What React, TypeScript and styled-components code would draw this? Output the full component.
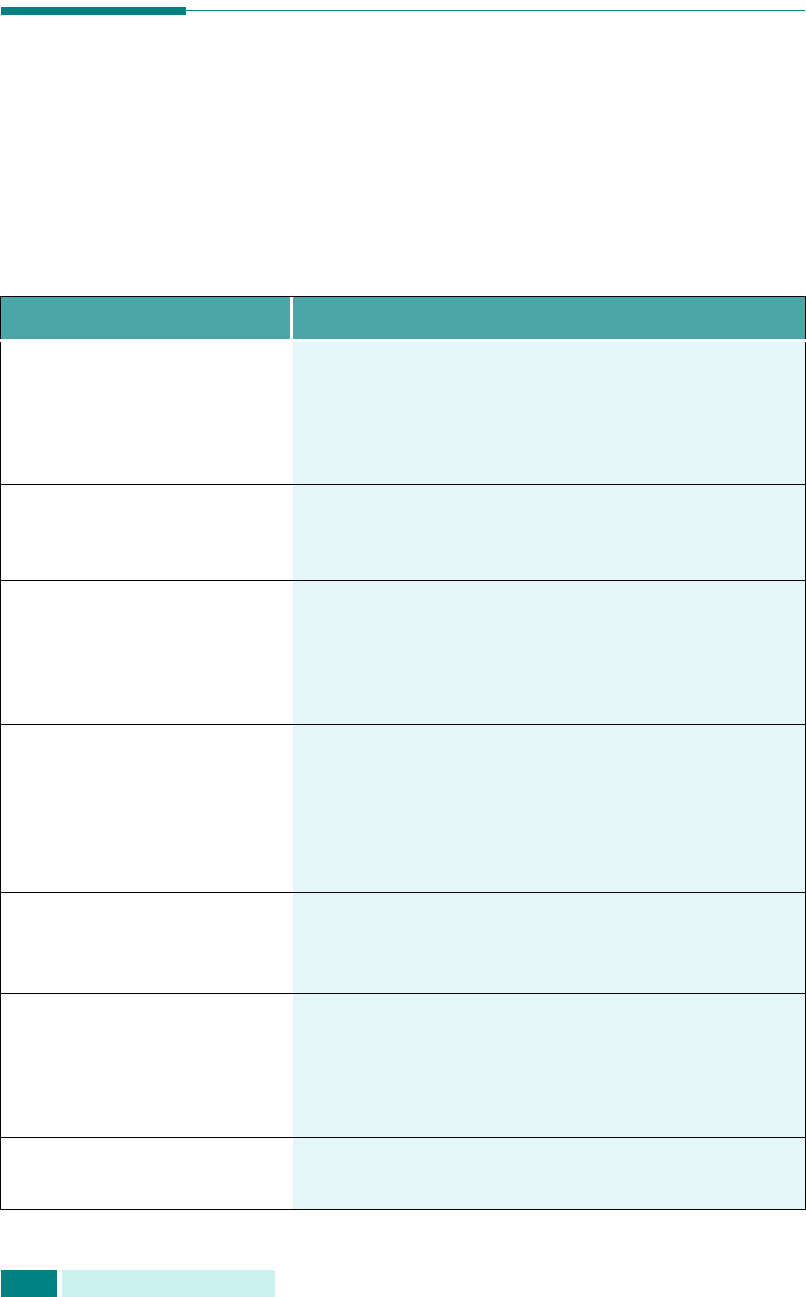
import React from 'react';
import styled, { createGlobalStyle } from 'styled-components';

const rowHeights = [143, 96, 144, 168, 101, 144, 72];

const GlobalStyle = createGlobalStyle`
  html, body {
    margin: 0;
    padding: 0;
    background: #fff;
    font-family: "Liberation Sans", Arial, sans-serif;
  }
  * {
    box-sizing: border-box;
  }
`;

const Page = styled.div`
  width: 806px;
  height: 1297px;
  overflow: hidden;
  background: #fff;
`;

const TopRule = styled.div`
  display: flex;
  align-items: flex-start;
  padding: 7px 1px 0 1px;
`;

const RuleBar = styled.div`
  width: 185px;
  height: 8px;
  background: #008080;
`;

const RuleLine = styled.div`
  flex: 1;
  height: 1px;
  margin-top: 3px;
  background: #008a7a;
`;

const Table = styled.div`
  margin-top: 281px;
  width: 806px;
`;

const HeaderRow = styled.div`
  display: grid;
  grid-template-columns: 289px 512px;
  column-gap: 3px;
  height: 43px;
  border-top: 1px solid #000;
  border-left: 1px solid #000;
  border-right: 1px solid #000;
`;

const HeaderCell = styled.div`
  background: #4da6a6;
  color: #fff;
`;

const Body = styled.div`
  margin-top: 3px;
  border-left: 1px solid #000;
  border-right: 1px solid #000;
`;

const BodyRow = styled.div<{ $height: number }>`
  display: grid;
  grid-template-columns: 292px 512px;
  height: ${({ $height }) => $height}px;
  border-bottom: 1px solid #000;
`;

const LabelCell = styled.div`
  background: #fff;
`;

const ValueCell = styled.div`
  background: #e4f7f6;
`;

const Footer = styled.div`
  display: flex;
  gap: 5px;
  margin-top: 60px;
  padding-left: 1px;
`;

const PageTab = styled.div`
  width: 56px;
  height: 27px;
  background: #008080;
`;

const ChapterTab = styled.div`
  width: 213px;
  height: 27px;
  background: #ccf2f0;
`;

const App = () => {
  return <Page>
    <GlobalStyle />
    <TopRule>
      <RuleBar />
      <RuleLine />
    </TopRule>
    <Table>
      <HeaderRow>
        <HeaderCell />
        <HeaderCell />
      </HeaderRow>
      <Body>
        {rowHeights.map((h, i) => {
          return <BodyRow key={i} $height={h}>
            <LabelCell />
            <ValueCell />
          </BodyRow>;
        })}
      </Body>
    </Table>
    <Footer>
      <PageTab />
      <ChapterTab />
    </Footer>
  </Page>;
};

export default App;
